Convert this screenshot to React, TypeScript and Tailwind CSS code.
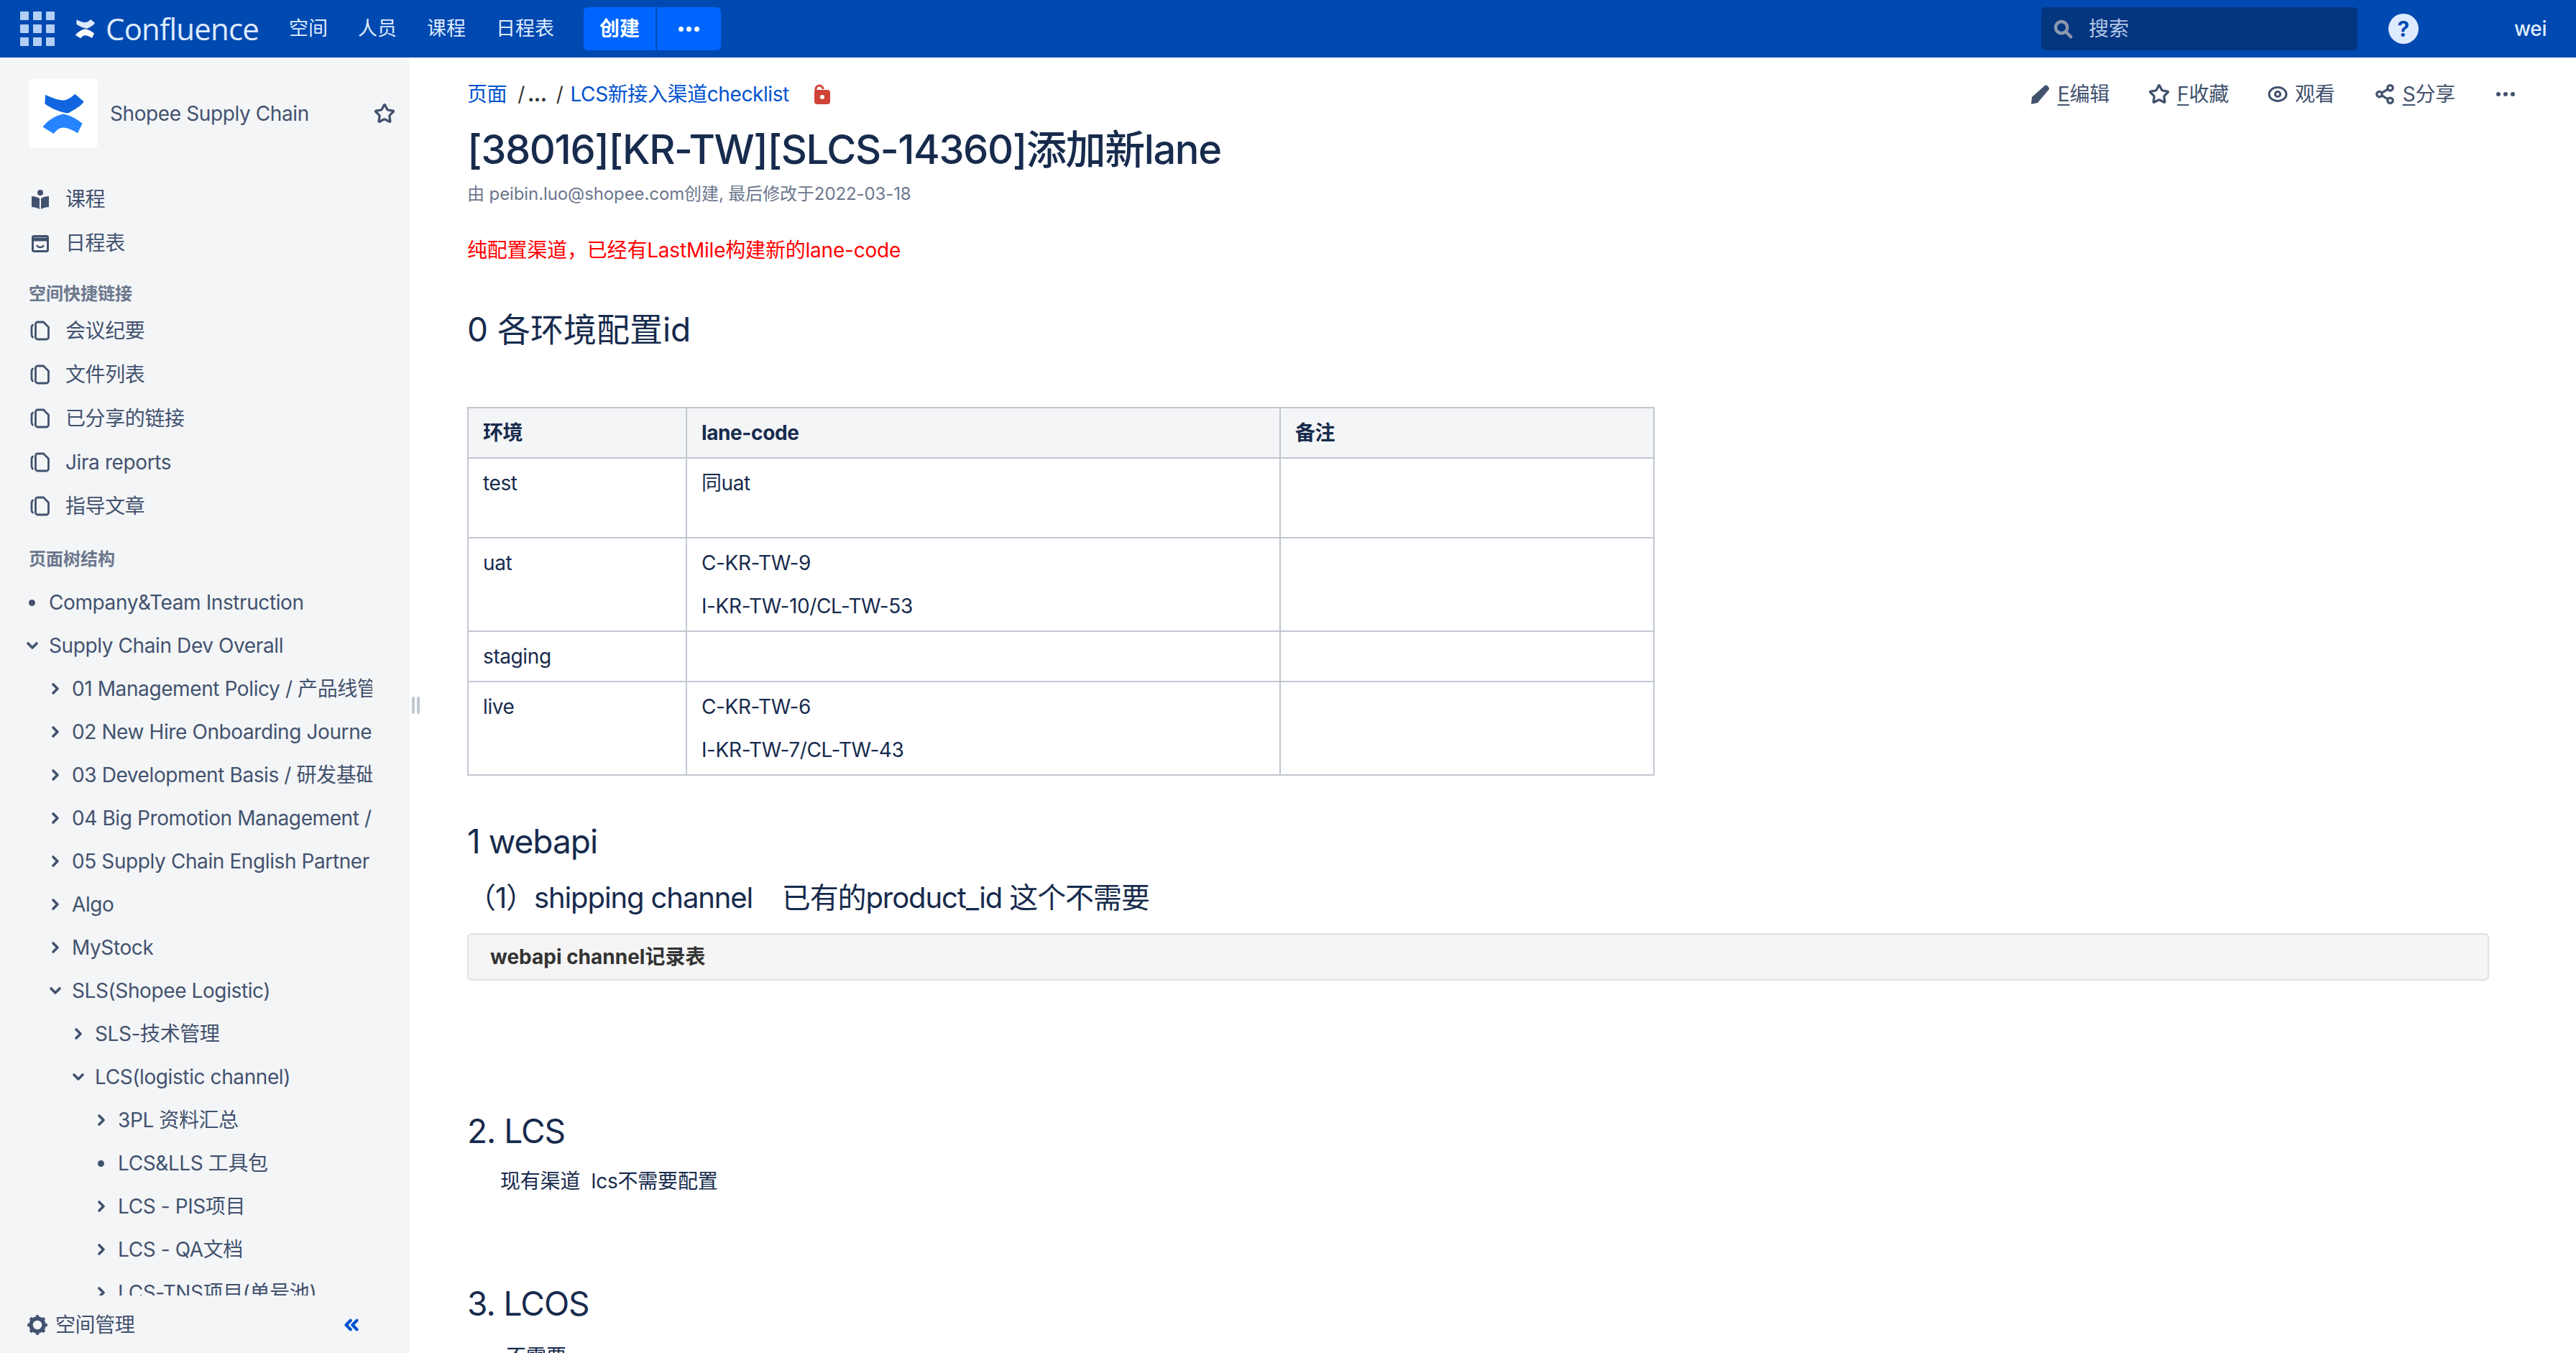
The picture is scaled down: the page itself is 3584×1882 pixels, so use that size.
import { ChevronDown, ChevronRight, ChevronsLeft, Share2, Star } from "lucide-react"

const font = "font-['Inter','Noto_Sans_CJK_SC',sans-serif]"

const shortcuts = ["会议纪要", "文件列表", "已分享的链接", "Jira reports", "指导文章"]

const tree = [
  { label: "Company&Team Instruction", depth: 0, kind: "dot" },
  { label: "Supply Chain Dev Overall", depth: 0, kind: "open" },
  { label: "01 Management Policy / 产品线管理规范", depth: 1, kind: "closed" },
  { label: "02 New Hire Onboarding Journey / 新人", depth: 1, kind: "closed" },
  { label: "03 Development Basis / 研发基础规范", depth: 1, kind: "closed" },
  { label: "04 Big Promotion Management / 大促", depth: 1, kind: "closed" },
  { label: "05 Supply Chain English Partner", depth: 1, kind: "closed" },
  { label: "Algo", depth: 1, kind: "closed" },
  { label: "MyStock", depth: 1, kind: "closed" },
  { label: "SLS(Shopee Logistic)", depth: 1, kind: "open" },
  { label: "SLS-技术管理", depth: 2, kind: "closed" },
  { label: "LCS(logistic channel)", depth: 2, kind: "open" },
  { label: "3PL 资料汇总", depth: 3, kind: "closed" },
  { label: "LCS&LLS 工具包", depth: 3, kind: "dot" },
  { label: "LCS - PIS项目", depth: 3, kind: "closed" },
  { label: "LCS - QA文档", depth: 3, kind: "closed" },
  { label: "LCS-TNS项目(单号池)", depth: 3, kind: "closed" },
]

const depthPad = ["pl-[36px]", "pl-[68px]", "pl-[100px]", "pl-[132px]"]

function PageIcon() {
  return (
    <svg viewBox="0 0 28 28" className="h-[28px] w-[28px] shrink-0 text-[#42526e]" fill="none" stroke="currentColor" strokeWidth="2.8">
      <path d="M9.5 2h9l7 7v14a3 3 0 0 1-3 3H10.5a3 3 0 0 1-3-3V4.5a3 3 0 0 1 2-2.5z" />
      <path d="M3.5 6Q2 7 2 10v9q0 3 1.5 4" strokeLinecap="round" />
    </svg>
  )
}

function LogoMark({ className, top, bottom }: { className: string; top: string; bottom: string }) {
  return (
    <svg viewBox="56 126 64 63" className={className}>
      <path d="M62 130L61 143C70 150 85 156 95 157C104 152 114 147 118 140L105 129C100 134 94 138 88 138C80 138 70 134 62 130z" fill={top} />
      <path d="M58 177L74 187C78 182 82 178 88 178C95 178 102 182 109 186L116 172C108 165 98 160 88 158C78 160 65 167 58 177z" fill={bottom} />
    </svg>
  )
}

function TopNav() {
  return (
    <header className="flex h-[80px] shrink-0 items-center bg-[#0049b0] text-[#deebff]">
      <div className="ml-[28px] grid w-[48px] grid-cols-3 gap-x-[6px] gap-y-[6px]">
        {Array.from({ length: 9 }).map((_, i) => (
          <span key={i} className="h-[12px] rounded-[1px] bg-[#b3cff5]" />
        ))}
      </div>
      <div className="ml-[28px] flex items-center gap-[14px]">
        <LogoMark className="h-[30px] w-[29px]" top="#dce8fb" bottom="#ffffff" />
        <span className="font-['Open_Sans',sans-serif] text-[42px] leading-none tracking-[-0.8px] text-[#deebff]">Confluence</span>
      </div>
      <nav className="ml-[42px] flex gap-[42px] text-[27px]">
        <span>空间</span>
        <span>人员</span>
        <span>课程</span>
        <span>日程表</span>
      </nav>
      <div className="ml-[41px] flex h-[60px] overflow-hidden rounded-[6px] bg-[#0065ff] text-white">
        <span className="flex w-[100px] items-center justify-center text-[28px] font-bold">创建</span>
        <span className="flex w-[91px] items-center justify-center gap-[4px] border-l-2 border-[#0049b0]">
          <i className="size-[7px] rounded-full bg-white" />
          <i className="size-[7px] rounded-full bg-white" />
          <i className="size-[7px] rounded-full bg-white" />
        </span>
      </div>
      <div className="ml-auto flex items-center">
        <div className="flex h-[60px] w-[440px] items-center rounded-[6px] bg-[#04357f] pl-[15px] text-[28px] text-[#b3c6e6]">
          <svg viewBox="0 0 24 24" className="size-[30px] text-[#8c98ad]" fill="none" stroke="currentColor" strokeWidth="3.6">
            <circle cx="10.5" cy="10.5" r="6.5" />
            <path d="M16 16l5 5" strokeLinecap="round" />
          </svg>
          <span className="ml-[21px]">搜索</span>
        </div>
        <span className="ml-[43px] flex size-[42px] items-center justify-center rounded-full bg-[#deebff] text-[30px] font-bold text-[#0049b0]">?</span>
        <div className="ml-[133px] mr-[40px] w-[46px] overflow-hidden text-[28px] font-medium leading-none tracking-[-0.4px]">weibin</div>
      </div>
    </header>
  )
}

function Sidebar() {
  return (
    <aside className="relative flex h-full w-[570px] shrink-0 flex-col bg-[#f4f5f7] text-[28px] tracking-[-0.4px] text-[#42526e]">
      <div className="flex items-center pl-[40px] pr-[20px] pt-[30px]">
        <div className="flex h-[96px] w-[96px] items-center justify-center rounded-[6px] bg-white">
          <LogoMark className="h-[60px] w-[62px]" top="#1166e0" bottom="#2684ff" />
        </div>
        <span className="ml-[17px]">Shopee Supply Chain</span>
        <Star className="ml-auto size-[30px]" strokeWidth={2.6} />
      </div>

      <div className="mt-[40px] flex flex-col pl-[42px]">
        <div className="flex h-[61px] items-center gap-[21px]">
          <svg viewBox="0 0 26 28" className="h-[28px] w-[28px] shrink-0 text-[#42526e]" fill="currentColor">
            <circle cx="13" cy="5" r="4" />
            <path d="M1 10c4 0 8 1 11 3v15c-3-2-7-3-11-3zM25 10c-4 0-8 1-11 3v15c3-2 7-3 11-3z" />
          </svg>
          <span>课程</span>
        </div>
        <div className="flex h-[61px] items-center gap-[21px]">
          <svg viewBox="0 0 26 28" className="h-[28px] w-[28px] shrink-0 text-[#42526e]" fill="none" stroke="currentColor" strokeWidth="3">
            <rect x="2.5" y="4.5" width="21" height="21" rx="2" />
            <path d="M2 9h22" strokeWidth="5" />
            <path d="M8 17c2 4 8 4 10 0" strokeWidth="2.4" />
          </svg>
          <span>日程表</span>
        </div>
      </div>

      <h3 className="ml-[40px] mt-[27px] text-[24px] font-semibold leading-[28px] tracking-normal text-[#6b778c]">空间快捷链接</h3>
      <ul className="mt-[6px] flex flex-col pl-[42px]">
        {shortcuts.map((s) => (
          <li key={s} className="flex h-[61px] items-center gap-[21px]">
            <PageIcon />
            <span>{s}</span>
          </li>
        ))}
      </ul>

      <h3 className="ml-[40px] mt-[30px] text-[24px] font-semibold leading-[28px] tracking-normal text-[#6b778c]">页面树结构</h3>
      <ul className="mt-[16px] flex min-h-0 flex-1 flex-col overflow-hidden">
        {tree.map((t) => (
          <li key={t.label} className={`flex h-[60px] shrink-0 items-center pr-[52px] ${depthPad[t.depth]}`}>
            <span className="flex w-[32px] shrink-0 items-center">
              {t.kind === "dot" && <i className="ml-[4px] size-[9px] rounded-full bg-[#42526e]" />}
              {t.kind === "open" && <ChevronDown className="size-[24px] -ml-[3px]" strokeWidth={3.6} />}
              {t.kind === "closed" && <ChevronRight className="size-[24px] -ml-[3px]" strokeWidth={3.6} />}
            </span>
            <span className="overflow-hidden whitespace-nowrap">{t.label}</span>
          </li>
        ))}
      </ul>

      <div className="flex h-[80px] shrink-0 items-center pl-[37px] pr-[66px] pt-[2px]">
        <svg viewBox="0 0 24 24" className="size-[30px]" fill="none" stroke="currentColor">
          <circle cx="12" cy="12" r="7.2" strokeWidth="4.4" />
          <path d="M12 1v4M12 19v4M1 12h4M19 12h4M4.2 4.2l3 3M16.8 16.8l3 3M4.2 19.8l3-3M16.8 7.2l3-3" strokeWidth="3.4" />
        </svg>
        <span className="ml-[10px]">空间管理</span>
        <ChevronsLeft className="ml-auto size-[30px] text-[#0052cc]" strokeWidth={3.4} />
      </div>

      <div className="absolute right-[-14px] top-[889px] flex gap-[3px]">
        <i className="h-[24px] w-[4px] rounded-full bg-[#c1c7d0]" />
        <i className="h-[24px] w-[4px] rounded-full bg-[#c1c7d0]" />
      </div>
    </aside>
  )
}

function Shortcut({ letter, label }: { letter?: string; label: string }) {
  return (
    <span className="whitespace-nowrap">
      {letter && <span className="underline underline-offset-[4px]">{letter}</span>}
      {label}
    </span>
  )
}

function PageActions() {
  return (
    <div className="-mr-[36px] flex items-center gap-[54px] text-[28px] tracking-[-0.2px] text-[#42526e]">
      <span className="flex items-center gap-[10px]">
        <svg viewBox="0 0 28 28" className="h-[28px] w-[28px]" fill="currentColor">
          <path d="M20 2c2-1.5 6 1.5 6 5L10 26l-9 2 1-10z" />
        </svg>
        <Shortcut letter="E" label="编辑" />
      </span>
      <span className="flex items-center gap-[10px]">
        <Star className="size-[30px]" strokeWidth={2.6} />
        <Shortcut letter="F" label="收藏" />
      </span>
      <span className="flex items-center gap-[10px]">
        <svg viewBox="0 0 28 22" className="h-[22px] w-[28px]" fill="none" stroke="currentColor" strokeWidth="3">
          <ellipse cx="14" cy="11" rx="12" ry="9.4" />
          <circle cx="14" cy="11" r="3.6" />
        </svg>
        <Shortcut label="观看" />
      </span>
      <span className="flex items-center gap-[10px]">
        <Share2 className="size-[30px]" strokeWidth={2.6} />
        <Shortcut letter="S" label="分享" />
      </span>
      <span className="ml-[3px] flex items-center gap-[4px]">
        <i className="size-[6px] rounded-full bg-[#42526e]" />
        <i className="size-[6px] rounded-full bg-[#42526e]" />
        <i className="size-[6px] rounded-full bg-[#42526e]" />
      </span>
    </div>
  )
}

function ConfigTable() {
  const cell = "border-2 border-[#c1c7d0] px-[20px] py-[14px] align-top text-[28px] leading-[40px] tracking-[-0.4px] text-[#172b4d]"
  const head = "border-2 border-[#c1c7d0] bg-[#f4f5f7] px-[20px] py-[14px] text-left align-top text-[28px] font-bold leading-[40px] tracking-[-0.4px] text-[#172b4d]"
  return (
    <table className="mt-[78px] w-[1650px] table-fixed border-collapse">
      <colgroup>
        <col className="w-[304px]" />
        <col className="w-[826px]" />
        <col className="w-[520px]" />
      </colgroup>
      <thead>
        <tr>
          <th className={head}>环境</th>
          <th className={head}>lane-code</th>
          <th className={head}>备注</th>
        </tr>
      </thead>
      <tbody>
        <tr className="h-[111px]">
          <td className={cell}>test</td>
          <td className={cell}>同uat</td>
          <td className={cell}></td>
        </tr>
        <tr>
          <td className={cell}>uat</td>
          <td className={cell}>
            <p>C-KR-TW-9</p>
            <p className="mt-[20px]">I-KR-TW-10/CL-TW-53</p>
          </td>
          <td className={cell}></td>
        </tr>
        <tr>
          <td className={cell}>staging</td>
          <td className={cell}></td>
          <td className={cell}></td>
        </tr>
        <tr>
          <td className={cell}>live</td>
          <td className={cell}>
            <p>C-KR-TW-6</p>
            <p className="mt-[20px]">I-KR-TW-7/CL-TW-43</p>
          </td>
          <td className={cell}></td>
        </tr>
      </tbody>
    </table>
  )
}

function Content() {
  return (
    <main className="min-w-0 flex-1 overflow-hidden pl-[80px] pr-[121px] pt-[30px] text-[#172b4d]">
      <div className="flex items-center justify-between">
        <div className="flex items-center text-[28px] leading-[40px] tracking-[-0.4px]">
          <span className="text-[#0052cc]">页面</span>
          <span className="ml-[15px] text-[#333]">/</span>
          <span className="ml-[4px] font-bold text-[#333]">...</span>
          <span className="ml-[13px] text-[#333]">/</span>
          <span className="ml-[10px] text-[#0052cc]">LCS新接入渠道checklist</span>
          <svg viewBox="0 0 24 28" className="ml-[33px] h-[28px] w-[24px]">
            <path d="M4 12V7a5 5 0 0 1 10 0" fill="none" stroke="#d04437" strokeWidth="3" />
            <rect x="2" y="8" width="22" height="20" rx="4" fill="#d04437" />
            <circle cx="13" cy="18" r="3" fill="#fff" />
          </svg>
        </div>
        <PageActions />
      </div>
      <h1 className="mt-[22px] text-[56px] font-medium leading-[68px] tracking-[-1.4px] text-[#172b4d]">[38016][KR-TW][SLCS-14360]添加新lane</h1>
      <p className="mt-[12px] text-[24px] leading-[32px] tracking-[-0.1px] text-[#6b778c]">由 peibin.luo@shopee.com创建, 最后修改于2022-03-18</p>
      <p className="mt-[42px] text-[28px] leading-[40px] tracking-[-0.2px] text-[#ff0000]">纯配置渠道，已经有LastMile构建新的lane-code</p>
      <h2 className="mt-[60px] text-[46px] leading-[60px]">0 各环境配置id</h2>
      <ConfigTable />
      <h2 className="mt-[61px] text-[46px] leading-[60px] tracking-[-1px]">1 webapi</h2>
      <h3 className="mt-[24px] text-[40px] leading-[50px] tracking-[-1.1px]">（1）shipping channel &nbsp; &nbsp;已有的product_id 这个不需要</h3>
      <div className="mt-[24px] flex h-[66px] items-center rounded-[6px] border-2 border-[#dfe1e6] bg-[#f5f5f5] pl-[30px] text-[28px] font-bold text-[#333]">webapi channel记录表</div>
      <h2 className="mt-[179px] text-[46px] leading-[60px] tracking-[-1px]">2. LCS</h2>
      <p className="mt-[20px] pl-[46px] text-[28px] leading-[40px] tracking-[-0.2px]">现有渠道&nbsp;&nbsp;lcs不需要配置</p>
      <h2 className="mt-[120px] text-[46px] leading-[60px] tracking-[-1px]">3. LCOS</h2>
      <p className="mt-[24px] pl-[54px] text-[28px] leading-[40px]">不需要</p>
    </main>
  )
}

export default function App() {
  return (
    <div className={`flex h-[1882px] w-[3584px] flex-col overflow-hidden bg-white ${font}`}>
      <TopNav />
      <div className="flex min-h-0 flex-1">
        <Sidebar />
        <Content />
      </div>
    </div>
  )
}
